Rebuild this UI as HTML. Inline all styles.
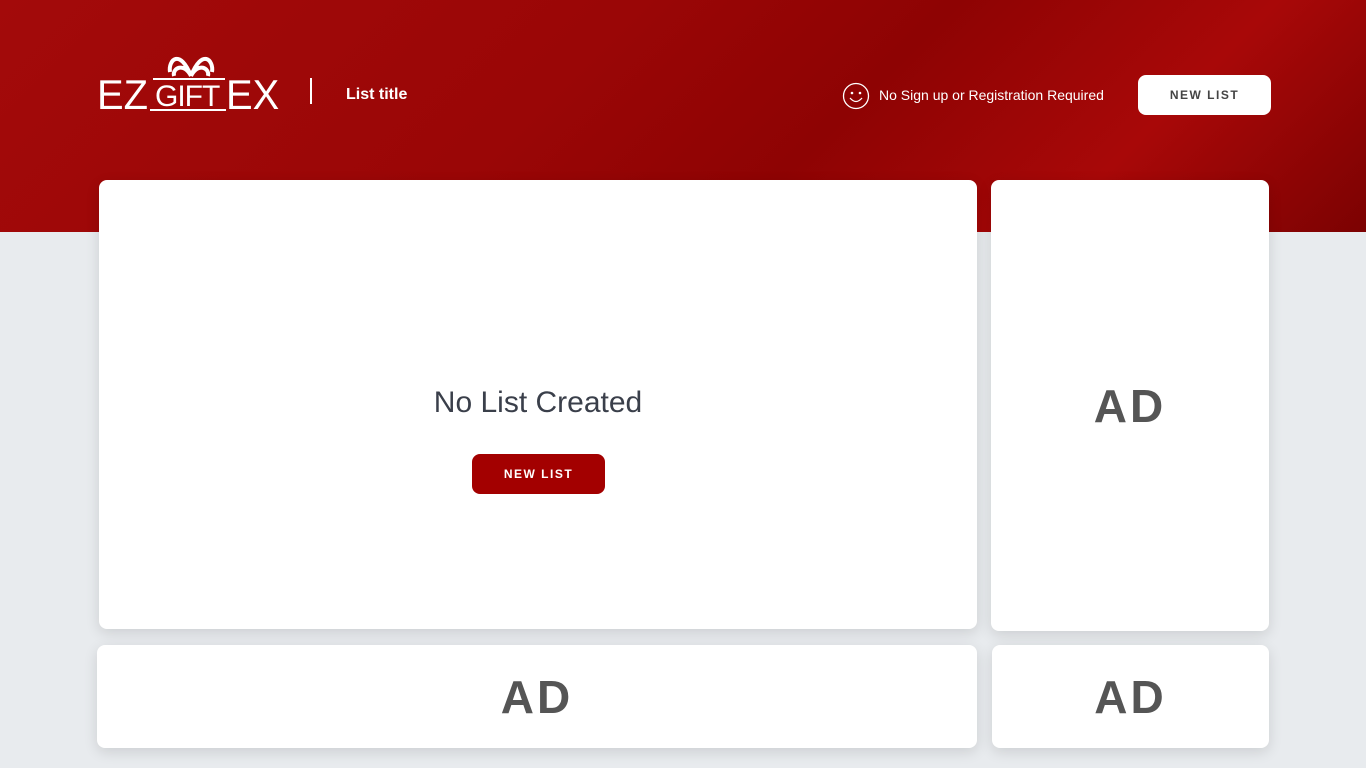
<!DOCTYPE html>
<html><head><style>
*{margin:0;padding:0;box-sizing:border-box}
body{width:1366px;height:768px;overflow:hidden;background:#e8ebee;font-family:"Liberation Sans",sans-serif;position:relative}
.hdr{position:absolute;left:0;top:0;width:1366px;height:232px;background:linear-gradient(135deg,#a30a0a 0%,#9a0606 40%,#8e0303 60%,#a80808 80%,#7c0202 100%)}
.card{position:absolute;background:#fff;border-radius:8px;box-shadow:0 4px 14px rgba(0,0,0,.12)}
.ad{display:flex;align-items:center;justify-content:center;font-weight:bold;font-size:46px;color:#555;letter-spacing:3px}
.btn{position:absolute;border-radius:8px;font-weight:bold;font-size:12px;letter-spacing:1.5px;display:flex;align-items:center;justify-content:center}
.lg{position:absolute;color:#fff;line-height:1;white-space:nowrap}
</style></head><body>
<div class="hdr"></div>
<div class="lg" style="left:97px;top:74px;font-size:42px;transform:scaleX(.95);transform-origin:left">EZ</div>
<div class="lg" style="left:155px;top:82px;font-size:30px;letter-spacing:-1px">GIFT</div>
<div style="position:absolute;left:153px;top:78px;width:72px;height:2px;background:#fff"></div>
<div style="position:absolute;left:150px;top:109px;width:76px;height:2px;background:#fff"></div>
<div class="lg" style="left:226px;top:74px;font-size:42px;transform:scaleX(.95);transform-origin:left">EX</div>
<svg style="position:absolute;left:160px;top:46px" width="62" height="34"><path d="M31 30C20 2 8 14 10 26M31 30C42 2 54 14 52 26M31 30C24 16 12 22 14 30M31 30C38 16 50 22 48 30" stroke="#fff" stroke-width="4" fill="none"/></svg>
<div style="position:absolute;left:310px;top:78px;width:2px;height:26px;background:#fff"></div>
<div style="position:absolute;left:346px;top:86px;color:#fff;font-weight:bold;font-size:16px">List title</div>
<svg style="position:absolute;left:842px;top:82px" width="28" height="28"><circle cx="14" cy="14" r="12.5" stroke="#fff" stroke-width="1.3" fill="none"/><circle cx="10" cy="11" r="1.3" fill="#fff"/><circle cx="18" cy="11" r="1.3" fill="#fff"/><path d="M8 16Q14 23 20 16" stroke="#fff" stroke-width="1.3" fill="none"/></svg>
<div style="position:absolute;left:879px;top:87px;color:#fff;font-size:14px">No Sign up or Registration Required</div>
<div class="btn" style="left:1138px;top:75px;width:133px;height:40px;background:#fff;color:#444">NEW LIST</div>
<div class="card" style="left:99px;top:180px;width:878px;height:449px"></div>
<div style="position:absolute;left:99px;top:386px;width:878px;text-align:center;font-size:30px;color:#3a3f4a">No List Created</div>
<div class="btn" style="left:472px;top:454px;width:133px;height:40px;background:#a30000;color:#fff">NEW LIST</div>
<div class="card ad" style="left:991px;top:180px;width:278px;height:451px">AD</div>
<div class="card ad" style="left:97px;top:645px;width:880px;height:103px">AD</div>
<div class="card ad" style="left:992px;top:645px;width:277px;height:103px">AD</div>
</body></html>
